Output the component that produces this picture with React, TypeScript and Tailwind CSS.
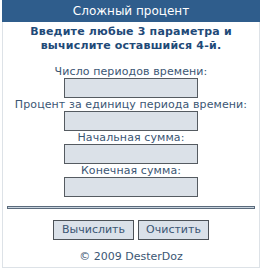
import React from "react";

const labels = [
  "Число периодов времени:",
  "Процент за единицу периода времени:",
  "Начальная сумма:",
  "Конечная сумма:",
];

export default function App() {
  return (
    <div
      className="w-[262px] h-[272px] bg-white"
      style={{ fontFamily: '"DejaVu Sans", Verdana, sans-serif' }}
    >
      <div className="ml-[2px] w-[258px] h-[268px] border-x border-b border-[#dde2e7] flex flex-col items-center">
        <div className="w-[258px] -mx-px h-[22px] bg-[#2f5d8c] text-white text-[12px] leading-[23px] text-center">
          Сложный процент
        </div>
        <div className="pt-[3px] text-[11px] leading-[14px] font-bold tracking-[0.2px] text-[#1f4a78] text-center">
          Введите любые 3 параметра и
          <br />
          вычислите оставшийся 4-й.
        </div>
        <div className="mt-[12px] flex flex-col items-center">
          {labels.map((l) => (
            <React.Fragment key={l}>
              <div className="text-[11px] leading-[13px] tracking-[0.1px] text-[#3b5674] text-center whitespace-nowrap">
                {l}
              </div>
              <div className="w-[134px] h-[20px] bg-[#dbe1e8] border border-[#555b61]" />
            </React.Fragment>
          ))}
        </div>
        <div className="mt-[9px] w-[248px] h-[3px] border border-[#5b6b7c] bg-[#c9d4df]" />
        <div className="mt-[11px] flex gap-[4px]">
          <div className="w-[81px] h-[20px] bg-[#dae1e9] border border-[#4c5258] text-[11px] leading-[18px] text-center text-[#3b5674]">
            Вычислить
          </div>
          <div className="w-[71px] h-[20px] bg-[#dae1e9] border border-[#4c5258] text-[11px] leading-[18px] text-center text-[#3b5674]">
            Очистить
          </div>
        </div>
        <div className="mt-[10px] text-[11px] leading-[14px] text-[#3b5674] text-center">
          © 2009 DesterDoz
        </div>
      </div>
    </div>
  );
}
